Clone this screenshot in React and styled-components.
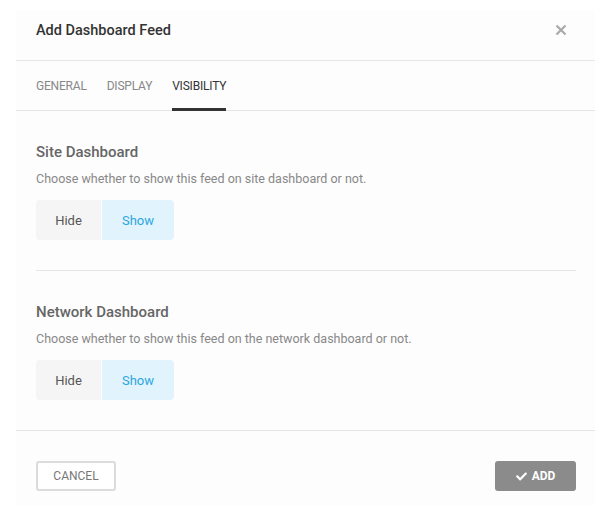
import styled, { createGlobalStyle } from "styled-components";
import { FaCheck } from "react-icons/fa";

const GlobalStyle = createGlobalStyle`
  html, body {
    margin: 0;
    padding: 0;
    background: #fff;
    font-family: Roboto, "Liberation Sans", Arial, sans-serif;
  }
`;

const Page = styled.div`
  position: relative;
  width: 610px;
  height: 517px;
  overflow: hidden;
  background: #fff;
`;

const EmptyState = styled.div`
  position: absolute;
  left: 280px;
  top: 330px;
  display: flex;
  flex-direction: column;
  align-items: center;
  gap: 40px;
  color: #ececec;
  font-size: 22px;

  svg {
    margin-left: 60px;
  }
`;

const Modal = styled.div`
  position: absolute;
  left: 16px;
  top: 10px;
  width: 579px;
  height: 495px;
  background: rgba(253, 253, 253, 0.96);
  display: flex;
  flex-direction: column;
`;

const Header = styled.div`
  height: 51px;
  box-sizing: border-box;
  display: flex;
  align-items: flex-start;
  justify-content: space-between;
  padding: 12px 28px 0 20px;
  border-bottom: 1px solid #e6e6e6;

  h2 {
    margin: 0;
    font-size: 14.5px;
    line-height: 18px;
    font-weight: 500;
    color: #333;
  }
`;

const Close = styled.button`
  border: 0;
  background: none;
  padding: 2px 0 0;
  display: flex;
  color: #a9a9a9;
  cursor: pointer;
`;

const Tabs = styled.div`
  height: 49px;
  display: flex;
  gap: 20px;
  padding: 0 20px;
  border-bottom: 1px solid #e6e6e6;
`;

const Tab = styled.div`
  display: flex;
  align-items: center;
  padding-top: 2px;
  font-size: 12px;
  letter-spacing: -0.2px;
  text-transform: uppercase;
  color: ${(p) => (p.$active ? "#333" : "#888")};
  border-bottom: 3px solid ${(p) => (p.$active ? "#333" : "transparent")};
  margin-bottom: -1px;
`;

const Body = styled.div`
  padding: 0 19px 0 20px;
  border-bottom: 1px solid #e6e6e6;
`;

const Section = styled.div`
  padding: 31px 0 30px;
  & + & {
    border-top: 1px solid #e6e6e6;
  }

  h3 {
    margin: 0 0 8px;
    font-size: 15px;
    line-height: 20px;
    font-weight: 500;
    color: #666;
  }

  p {
    margin: 0 0 12px;
    font-size: 12.5px;
    line-height: 18px;
    color: #888;
  }
`;

const Toggle = styled.div`
  display: flex;
  gap: 1px;
`;

const Option = styled.button`
  height: 40px;
  width: ${(p) => p.$w}px;
  border: 0;
  font-family: inherit;
  font-size: 13px;
  background: ${(p) => (p.$on ? "#e1f4fd" : "#f5f5f5")};
  color: ${(p) => (p.$on ? "#2ca6dd" : "#555")};
  &:first-child {
    border-radius: 4px 0 0 4px;
  }
  &:last-child {
    border-radius: 0 4px 4px 0;
  }
`;

const Footer = styled.div`
  display: flex;
  justify-content: space-between;
  padding: 30px 19px 0 20px;
`;

const Button = styled.button`
  height: 30px;
  width: ${(p) => p.$w}px;
  border-radius: 3px;
  font-family: inherit;
  font-size: 12px;
  text-transform: uppercase;
  display: flex;
  align-items: center;
  justify-content: center;
  gap: 5px;
  ${(p) =>
    p.$primary
      ? `background: #8b8b8b; border: 0; color: #fff; font-weight: 700;`
      : `background: #fff; border: 2px solid #dcdcdc; color: #777;`}
`;

function Visibility({ title, text }) {
  return (
    <Section>
      <h3>{title}</h3>
      <p>{text}</p>
      <Toggle>
        <Option $w={65}>Hide</Option>
        <Option $w={72} $on>
          Show
        </Option>
      </Toggle>
    </Section>
  );
}

export default function App() {
  return (
    <Page>
      <GlobalStyle />
      <EmptyState>
        <svg width="80" height="110" viewBox="0 0 80 110" fill="none" stroke="#f3f3f3" strokeWidth="6">
          <circle cx="40" cy="36" r="30" />
          <path d="M40 66 L34 108" />
        </svg>
        <span>No feed added yet</span>
      </EmptyState>
      <Modal>
        <Header>
          <h2>Add Dashboard Feed</h2>
          <Close>
            <svg width="12" height="12" viewBox="0 0 12 12">
              <path d="M1.5 1.5 L10.5 10.5 M10.5 1.5 L1.5 10.5" stroke="currentColor" strokeWidth="2.2" />
            </svg>
          </Close>
        </Header>
        <Tabs>
          <Tab>General</Tab>
          <Tab>Display</Tab>
          <Tab $active>Visibility</Tab>
        </Tabs>
        <Body>
          <Visibility title="Site Dashboard" text="Choose whether to show this feed on site dashboard or not." />
          <Visibility
            title="Network Dashboard"
            text="Choose whether to show this feed on the network dashboard or not."
          />
        </Body>
        <Footer>
          <Button $w={80}>Cancel</Button>
          <Button $w={81} $primary>
            <FaCheck size={11} />
            Add
          </Button>
        </Footer>
      </Modal>
    </Page>
  );
}
